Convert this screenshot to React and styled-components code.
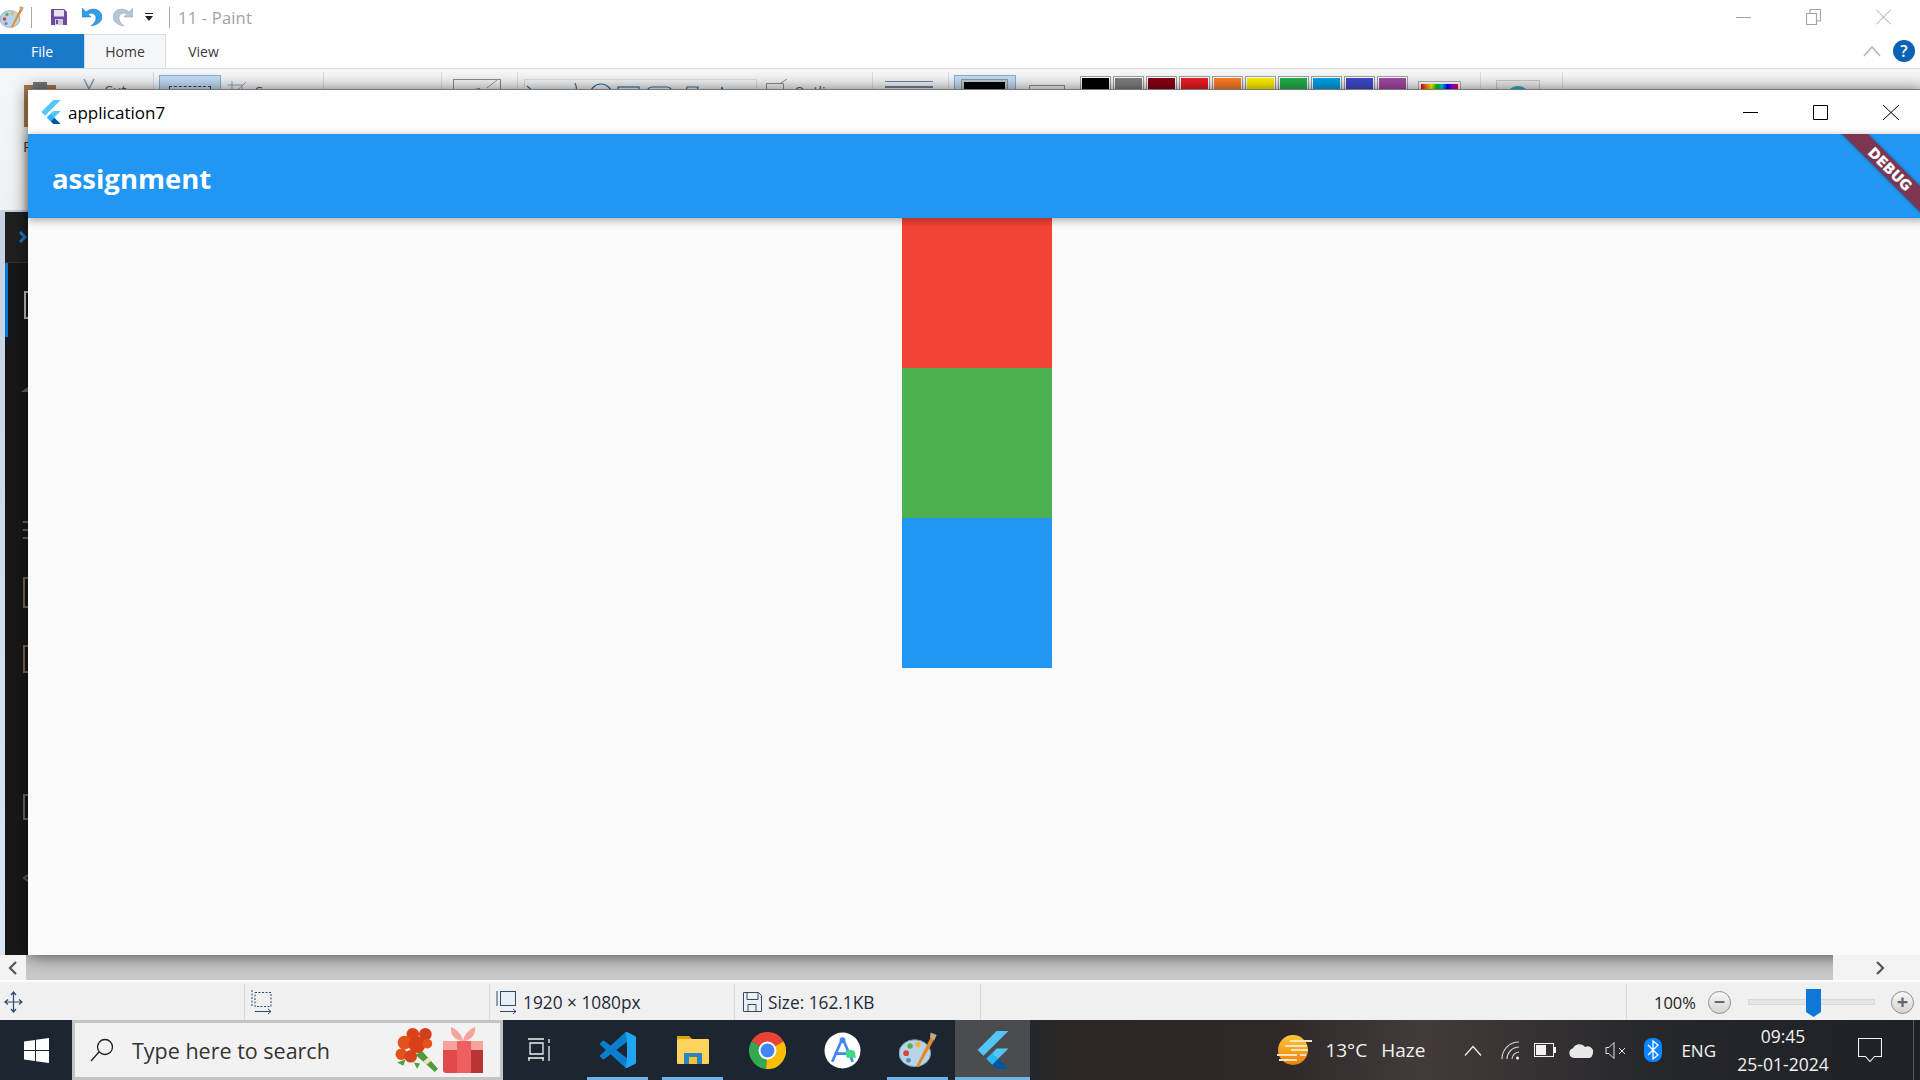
import React from 'react';
import styled, { createGlobalStyle } from 'styled-components';

const UI = `"Open Sans", "Noto Sans", "Liberation Sans", sans-serif`;

const GlobalStyle = createGlobalStyle`
  html, body { margin: 0; padding: 0; background: #fff; }
  body { font-family: ${UI}; overflow: hidden; }
`;

// desktop
const Screen = styled.div`
  position: relative;
  width: 1920px;
  height: 1080px;
  overflow: hidden;
  display: flex;
  flex-direction: column;
`;

// paint window behind the flutter app
const PaintTitle = styled.div`
  height: 34px;
  display: flex;
  align-items: center;
  background: #fff;
  flex: none;
`;
const QuickIcon = styled.span`
  display: flex;
  margin-left: ${(p) => p.$ml || 0}px;
`;
const TitleSep = styled.span`
  width: 1px;
  height: 21px;
  background: #a9a9a9;
  margin-left: ${(p) => p.$ml}px;
`;
const PaintName = styled.span`
  margin-left: 8px;
  font-size: 16.5px;
  color: #a2a2a2;
  letter-spacing: 0.2px;
`;
const TitleButtons = styled.div`
  margin-left: auto;
  display: flex;
  align-items: center;
  gap: ${(p) => p.$gap}px;
  padding-right: ${(p) => p.$right}px;
`;
const TabRow = styled.div`
  height: 34px;
  display: flex;
  align-items: stretch;
  background: #fff;
  flex: none;
`;
const Tab = styled.div`
  width: ${(p) => p.$w}px;
  box-sizing: border-box;
  display: flex;
  align-items: center;
  justify-content: center;
  font-size: 14px;
  color: ${(p) => (p.$file ? '#fff' : '#3b3b3b')};
  background: ${(p) => (p.$file ? '#1979ca' : p.$active ? '#f5f6f7' : '#fff')};
  border: ${(p) => (p.$active ? '1px solid #dadbdc' : 'none')};
  border-bottom: none;
`;
const TabEnd = styled.div`
  margin-left: auto;
  display: flex;
  align-items: center;
  gap: 12px;
  padding-right: 5px;
`;
const HelpDot = styled.span`
  width: 22px;
  height: 22px;
  border-radius: 50%;
  background: #0a62b4;
  color: #fff;
  font-size: 16px;
  font-weight: 600;
  display: flex;
  align-items: center;
  justify-content: center;
`;
const Ribbon = styled.div`
  height: 142px;
  flex: none;
  box-sizing: border-box;
  border-top: 1px solid #dadbdc;
  background: linear-gradient(#f5f6f7, #f0f1f2);
  display: flex;
  padding-top: 3px;
  font-size: 14px;
  color: #555;
`;
const Group = styled.div`
  width: ${(p) => p.$w}px;
  flex: none;
  box-sizing: border-box;
  height: 124px;
  padding-left: ${(p) => p.$pl || 0}px;
  border-right: 1px solid #dcdcdc;
  display: flex;
  align-items: flex-start;
`;
const PasteCol = styled.div`
  width: 34px;
  padding-top: 10px;
  display: flex;
  flex-direction: column;
  font-size: 15px;
  color: #444;
`;
const PasteLabel = styled.span`
  margin-top: 8px;
`;
const SmallTool = styled.div`
  display: flex;
  align-items: flex-start;
  gap: ${(p) => p.$gap ?? 5}px;
  margin-left: ${(p) => p.$ml || 0}px;
  margin-top: ${(p) => p.$mt ?? 6}px;
`;
const ToolLabel = styled.span`
  padding-top: ${(p) => p.$pt}px;
`;
const ToolCaret = styled.span`
  display: flex;
  margin-top: 10px;
`;
const SelectButton = styled.div`
  width: 62px;
  height: 64px;
  margin-top: 3px;
  box-sizing: border-box;
  background: #c6ddf5;
  border: 1px solid #7fb0e0;
  display: flex;
  justify-content: center;
  padding-top: 10px;
`;
const DashedBox = styled.div`
  width: 42px;
  height: 30px;
  box-sizing: border-box;
  border: 1px dashed #25486e;
`;
const BrushButton = styled.div`
  width: 48px;
  height: 50px;
  margin-top: 7px;
  box-sizing: border-box;
  border: 1px solid #8c8c8c;
  background: #f6f6f6;
`;
const ShapeBox = styled.div`
  width: 233px;
  height: 60px;
  margin-top: 7px;
  box-sizing: border-box;
  border: 1px solid #dcdcdc;
  display: flex;
`;
const SizeLines = styled.div`
  margin: 9px 0 0 12px;
  width: 48px;
  display: flex;
  flex-direction: column;
  gap: 4px;
`;
const SizeLine = styled.div`
  height: ${(p) => p.$h}px;
  background: #7184a3;
`;
const ColorOne = styled.div`
  width: 62px;
  height: 70px;
  margin-top: 3px;
  box-sizing: border-box;
  background: #c6ddf5;
  border: 1px solid #7fb0e0;
  padding: 3px 6px;
`;
const ColorFrame = styled.div`
  width: 47px;
  height: 40px;
  box-sizing: border-box;
  border: 1px solid #8f98a3;
  background: #fff;
  padding: 2px;
  box-shadow: inset 0 0 0 2px #c0c8d2;
`;
const ColorFill = styled.div`
  height: 100%;
  background: ${(p) => p.$c};
`;
const ColorTwo = styled.div`
  width: 36px;
  height: 36px;
  margin: 13px 0 0 13px;
  box-sizing: border-box;
  border: 1px solid #8c8c8c;
  background: #f4f4f4;
`;
const Swatches = styled.div`
  display: flex;
  gap: 2px;
  margin: 4px 0 0 15px;
`;
const Swatch = styled.div`
  width: 31px;
  height: 28px;
  box-sizing: border-box;
  border: 1px solid #a0a0a0;
  box-shadow: inset 0 0 0 1px #fff;
  background: ${(p) => p.$c};
`;
const Rainbow = styled.div`
  width: 43px;
  height: 40px;
  margin: 9px 0 0 10px;
  box-sizing: border-box;
  border: 1px solid #b0b0b0;
  padding: 2px;
  background: #fff;
`;
const RainbowFill = styled.div`
  height: 100%;
  background: linear-gradient(90deg, #f00, #f80, #ff0, #0c0, #0cf, #00f, #90f, #f00);
`;
const Paint3D = styled.div`
  width: 44px;
  height: 50px;
  margin-top: 8px;
  box-sizing: border-box;
  border: 1px solid #c8c8c8;
  background: #efefef;
  display: flex;
  justify-content: center;
  padding-top: 5px;
`;
const Bubble = styled.div`
  width: 24px;
  height: 24px;
  border-radius: 50%;
  background: #27b2c9;
`;

const CanvasArea = styled.div`
  flex: 1;
  min-height: 0;
  box-sizing: border-box;
  padding: 2px 0 0 5px;
  background: linear-gradient(#c6d1e2, #dbe6f5);
`;
// the vs code screenshot pasted in the paint canvas, only a thin strip shows
const CapturedEditor = styled.div`
  width: 100%;
  height: 100%;
  background: #181818;
  display: flex;
  flex-direction: column;
`;
const EditorHeader = styled.div`
  height: 51px;
  flex: none;
  box-sizing: border-box;
  background: #202020;
  border-bottom: 1px solid #333;
  padding: 14px 0 0 13px;
`;
const EditorRail = styled.div`
  display: flex;
  align-items: flex-start;
`;
const ActiveMark = styled.div`
  width: 3px;
  height: 74px;
  background: #0078d4;
`;
const ScrollRow = styled.div`
  height: 25px;
  flex: none;
  display: flex;
  background: linear-gradient(#c4c4c4, #c9c9c9);
`;
const ScrollButton = styled.div`
  position: relative;
  z-index: 2;
  width: ${(p) => p.$w}px;
  display: flex;
  align-items: center;
  justify-content: ${(p) => p.$justify || 'center'};
  padding-right: ${(p) => p.$pr || 0}px;
  box-sizing: border-box;
  background: #f3f3f3;
`;
const ScrollTrack = styled.div`
  flex: 1;
`;
const StatusBar = styled.div`
  height: 40px;
  flex: none;
  box-sizing: border-box;
  padding-top: 2px;
  border-top: 2px solid #fff;
  background: #f0f0f0;
  background-clip: padding-box;
  display: flex;
  font-size: 17.3px;
  color: #1f2a3a;
`;
const StatusCell = styled.div`
  width: ${(p) => p.$w}px;
  flex: ${(p) => (p.$grow ? 1 : 'none')};
  box-sizing: border-box;
  display: flex;
  align-items: center;
  gap: ${(p) => p.$gap ?? 6}px;
  padding-left: ${(p) => p.$pl || 0}px;
  border-right: ${(p) => (p.$last ? 'none' : '1px solid #d9d9d9')};
`;
const ZoomLabel = styled.span`
  width: 44px;
  color: #222;
  font-size: 16.5px;
`;
const ZoomButton = styled.span`
  width: 23px;
  height: 23px;
  box-sizing: border-box;
  border-radius: 50%;
  border: 1px solid #8e8e8e;
  background: linear-gradient(#f8f8f8, #d4d4d4);
  color: #666;
  font-size: 20px;
  font-weight: 700;
  line-height: 19px;
  text-align: center;
  margin-left: ${(p) => p.$ml || 0}px;
`;
const ZoomTrack = styled.div`
  position: relative;
  width: 127px;
  height: 6px;
  margin-left: 17px;
  background: #e3e8e6;
  border: 1px solid #d6dad8;
  box-sizing: border-box;
`;
const ZoomThumb = styled.div`
  position: absolute;
  left: 57px;
  top: -11px;
  width: 15px;
  height: 28px;
  background: #0e78d6;
  clip-path: polygon(0 0, 100% 0, 100% 82%, 50% 100%, 0 82%);
`;

// taskbar
const Taskbar = styled.div`
  height: 60px;
  flex: none;
  display: flex;
  align-items: stretch;
  color: #f2f2f2;
  background: linear-gradient(90deg, #1b2630 0, #1b2630 1000px, #2b2726 1060px, #2e2828 1280px, #433b3b 1420px, #3a3435 1500px, #25272b 1660px, #1e2125 1920px);
`;
const StartButton = styled.div`
  width: 72px;
  display: flex;
  align-items: center;
  justify-content: center;
  flex: none;
`;
const SearchBox = styled.div`
  width: 431px;
  flex: none;
  box-sizing: border-box;
  border: 3px solid #c4c4c4;
  background: #f2f2f2;
  display: flex;
  align-items: center;
  padding-left: 15px;
  color: #333;
  font-size: 21.5px;
`;
const SearchText = styled.span`
  margin-left: 18px;
  padding-top: 1px;
  flex: 1;
`;
const SearchArt = styled.div`
  display: flex;
  align-items: center;
  padding-right: 16px;
  gap: 3px;
`;
const TaskSlot = styled.div`
  position: relative;
  width: ${(p) => p.$w || 75}px;
  flex: none;
  box-sizing: border-box;
  padding-right: ${(p) => p.$pr || 0}px;
  display: flex;
  align-items: center;
  justify-content: center;
  background: ${(p) => (p.$active ? '#4a4c50' : 'transparent')};
  &::after {
    content: '';
    display: ${(p) => (p.$open ? 'block' : 'none')};
    position: absolute;
    bottom: 0;
    height: 3px;
    left: ${(p) => (p.$active ? 0 : 7)}px;
    right: ${(p) => (p.$active ? 0 : 7)}px;
    background: #6db3e8;
  }
`;
const Tray = styled.div`
  margin-left: auto;
  display: flex;
  align-items: center;
`;
const TrayText = styled.span`
  font-size: ${(p) => p.$size || 19}px;
  margin-left: ${(p) => p.$ml || 0}px;
`;
const TrayIcon = styled.span`
  display: flex;
  margin-left: ${(p) => p.$ml}px;
`;
const Clock = styled.div`
  margin-left: 20px;
  width: 94px;
  display: flex;
  flex-direction: column;
  align-items: center;
  gap: 5px;
  font-size: 17.5px;
  line-height: 23px;
  white-space: nowrap;
`;
const TrayEdge = styled.div`
  margin-left: 31px;
  width: 1px;
  height: 100%;
  background: #55585c;
  margin-right: 6px;
`;

// flutter app window, floats over paint
const FlutterWindow = styled.div`
  position: absolute;
  left: 28px;
  top: 89px;
  width: 1898px;
  height: 866px;
  z-index: 1;
  background: #fafafa;
  border-top: 1px solid #777;
  box-sizing: border-box;
  box-shadow: 0 1px 16px rgba(0, 0, 0, 0.6);
  display: flex;
  flex-direction: column;
`;
const WinTitle = styled.div`
  height: 44px;
  flex: none;
  background: #fff;
  display: flex;
  align-items: center;
  padding-left: 11px;
  font-size: 17px;
  color: #000;
`;
const WinName = styled.span`
  margin-left: 5px;
`;
const AppBarClip = styled.div`
  position: relative;
  z-index: 1;
  box-shadow: 0 2px 8px rgba(0, 0, 0, 0.35);
`;
const AppBar = styled.div`
  position: relative;
  height: 84px;
  overflow: hidden;
  background: #2196f3;
  display: flex;
  align-items: center;
  padding: 4px 0 0 24px;
  color: #fff;
  font-size: 27.5px;
  font-weight: 700;
  box-sizing: border-box;
`;
const DebugBanner = styled.div`
  position: absolute;
  top: 26px;
  right: -44px;
  width: 160px;
  height: 18px;
  transform: rotate(45deg);
  background: #7d3651;
  box-shadow: 0 0 3px rgba(0, 0, 0, 0.5);
  color: #fff;
  font-family: "DejaVu Sans", sans-serif;
  font-size: 14px;
  font-weight: 700;
  line-height: 18px;
  text-align: center;
  -webkit-text-stroke: 0.3px #fff;
`;
const AppBody = styled.div`
  flex: 1;
  display: flex;
  flex-direction: column;
  align-items: center;
`;
const ColorSquare = styled.div`
  width: 150px;
  height: 150px;
  flex: none;
  background: ${(p) => p.$c};
`;

const FlutterLogo = ({ size = 24 }) => (
  <svg width={size} height={size} viewBox="0 0 24 24">
    <path d="M14.3 0 2.3 12 6 15.7 21.7 0z" fill="#54c5f8" />
    <path d="M14.3 11.1 7.9 17.5l3.7 3.7 10.1-10.1z" fill="#54c5f8" />
    <path d="M11.6 21.2 14.3 24h7.4l-6.5-6.5z" fill="#01579b" />
    <path d="m7.9 17.5 3.7-3.7 3.6 3.7-3.6 3.7z" fill="#29b6f6" />
  </svg>
);

const Line = ({ w = 16, h = 16, color = '#000', d, sw = 1 }) => (
  <svg width={w} height={h} viewBox={`0 0 ${w} ${h}`} fill="none" stroke={color} strokeWidth={sw}>
    <path d={d} />
  </svg>
);

const PaintIcon = ({ size = 24 }) => (
  <svg width={size} height={size} viewBox="0 0 24 24">
    <ellipse cx="10" cy="14" rx="10" ry="8.5" fill="#b9d4e6" stroke="#7c97ad" strokeWidth="0.6" />
    <circle cx="4.5" cy="14" r="1.8" fill="#d8443c" />
    <circle cx="7" cy="9.5" r="1.7" fill="#5cab58" />
    <circle cx="12" cy="8.5" r="1.7" fill="#e9b93a" />
    <circle cx="6" cy="18.5" r="1.5" fill="#4a8dd2" />
    <path d="M21 2 11 22l1.5.8L23 4z" fill="#e18b2c" />
    <path d="M20 1l3.8 1.6-1.6 3.4L19.5 4z" fill="#c8a884" />
  </svg>
);

const SaveIcon = () => (
  <svg width="16" height="16" viewBox="0 0 16 16">
    <path d="M0 0h13l3 3v13H0z" fill="#6f4a9e" />
    <rect x="3" y="1" width="10" height="6.5" fill="#e6e2ef" />
    <rect x="4" y="10" width="8" height="6" fill="#cfc8df" />
    <rect x="5" y="11" width="2" height="4" fill="#6f4a9e" />
  </svg>
);

const ArrowIcon = ({ flip, color, edge }) => (
  <svg width="20" height="21" viewBox="0 0 20 21" style={flip ? { transform: 'scaleX(-1)' } : undefined}>
    <path d="M0 1v9h9L6 7c3-2 8-.5 8 4 0 3-2 5.500-5 8 6-1 11-4 11-9C20 3 11-1 4 5z" fill={color} stroke={edge} strokeWidth="0.5" />
  </svg>
);

const VsCodeIcon = () => (
  <svg width="36" height="36" viewBox="0 0 24 24">
    <path d="M23.15 2.587 18.21.21a1.494 1.494 0 0 0-1.705.29l-9.46 8.63-4.12-3.128a.999.999 0 0 0-1.276.057L.327 7.261A1 1 0 0 0 .326 8.74L3.899 12 .326 15.26a1 1 0 0 0 .001 1.479L1.65 17.94a.999.999 0 0 0 1.276.057l4.12-3.128 9.46 8.63a1.492 1.492 0 0 0 1.704.29l4.942-2.377A1.5 1.5 0 0 0 24 20.06V3.939a1.5 1.5 0 0 0-.85-1.352zm-5.146 14.861L10.826 12l7.178-5.448v10.896z" fill="#0a7fd0" />
    <path d="M17 .2c.4-.1.8-.1 1.200 0l4.950 2.390A1.500 1.500 0 0 1 24 3.940v16.120a1.500 1.500 0 0 1-.85 1.350L18.200 23.800c-.4.100-.8.100-1.200-.100l1-6.250V6.550z" fill="#1fa6f2" />
  </svg>
);

const ExplorerIcon = () => (
  <svg width="34" height="34" viewBox="0 0 34 34">
    <path d="M1 3h12l3 3h-15z" fill="#e0a30e" />
    <rect x="1" y="6" width="32" height="25" rx="1" fill="#ffd35c" />
    <path d="M8 31V20h18v11h-5v-5h-8v5z" fill="#2a83c4" />
    <rect x="13" y="24" width="8" height="7" fill="#f4c430" />
  </svg>
);

const ChromeIcon = () => (
  <svg width="37" height="37" viewBox="0 0 24 24">
    <path d="M12 12 1.600 6a12 12 0 0 1 20.800 0z" fill="#ea4335" />
    <path d="M12 12 1.600 6A12 12 0 0 0 11 24z" fill="#34a853" />
    <path d="M12 12 22.400 6A12 12 0 0 1 11 24z" fill="#fbbc05" />
    <circle cx="12" cy="12" r="5.800" fill="#fff" />
    <circle cx="12" cy="12" r="4.500" fill="#4285f4" />
  </svg>
);

const StudioIcon = () => (
  <svg width="37" height="37" viewBox="0 0 36 36">
    <circle cx="18" cy="18" r="17.500" fill="#fff" />
    <path d="M18 6 8 29M18 6l10 23M10 21h16" stroke="#4285f4" strokeWidth="2.600" fill="none" />
    <circle cx="18" cy="8" r="2.800" fill="#4285f4" />
    <path d="M21 19a7 7 0 0 1 9 0l1 6h-9z" fill="#3ddc84" />
  </svg>
);

const Bouquet = () => (
  <svg width="44" height="45" viewBox="0 0 42 43">
    <path d="M20 26 38 42l3-3-16-18z" fill="#4f9c3a" />
    <path d="M27 32l5-4 3 3-5 4z" fill="#efe3c2" />
    <circle cx="17" cy="6" r="6" fill="#d8431a" />
    <circle cx="29" cy="6" r="6" fill="#cf3f1c" />
    <circle cx="9" cy="14" r="6.500" fill="#e4521c" />
    <circle cx="21" cy="16" r="8" fill="#d9401a" />
    <circle cx="6" cy="25" r="5.500" fill="#e4521c" />
    <circle cx="15" cy="27" r="6" fill="#d8431a" />
    <circle cx="31" cy="15" r="4.500" fill="#e4521c" />
    <path d="M2 33l8-3-2 6zM18 33l6 1-3 5z" fill="#52a23a" />
  </svg>
);

const Gift = () => (
  <svg width="42" height="48" viewBox="0 0 42 48">
    <path d="M21 15C12 14 8 8 9 1c5 2 11 7 12 14 1-7 7-12 12-14 1 7-3 13-12 14z" fill="#f5a49b" />
    <rect x="1" y="15" width="40" height="32" rx="3" fill="#e04a4a" />
    <rect x="1" y="15" width="40" height="9" fill="#f5a49b" />
    <rect x="29" y="24" width="12" height="23" fill="#b93434" />
    <rect x="15" y="15" width="14" height="32" fill="#ee5f5f" />
  </svg>
);

const WeatherIcon = () => (
  <svg width="36" height="30" viewBox="0 0 36 30">
    <defs>
      <linearGradient id="sun" x1="0" y1="0" x2="0" y2="1">
        <stop offset="0" stopColor="#fcc73a" />
        <stop offset="1" stopColor="#ee7d0e" />
      </linearGradient>
    </defs>
    <circle cx="17" cy="15" r="15" fill="url(#sun)" />
    <path d="M14 6h22M9 11h22M15 15h17M1 20h20M24 20h6M3 25h18" stroke="#f8e3b4" strokeWidth="2" />
  </svg>
);

const App = () => {
  const swatches = ['#000000', '#7f7f7f', '#880015', '#ed1c24', '#ff7f27', '#fff200', '#22b14c', '#00a2e8', '#3f48cc', '#a349a4'];

  return (
    <Screen>
      <GlobalStyle />

      <PaintTitle>
        <PaintIcon />
        <TitleSep $ml={7} />
        <QuickIcon $ml={19}><SaveIcon /></QuickIcon>
        <QuickIcon $ml={15}><ArrowIcon color="#2f9fe8" edge="#1673b8" /></QuickIcon>
        <QuickIcon $ml={11}><ArrowIcon flip color="#b6c6d6" edge="#90a2b4" /></QuickIcon>
        <QuickIcon $ml={12}>
          <svg width="8" height="9" viewBox="0 0 8 9"><path d="M0 0h8v1H0zM0 3h8L4 8z" fill="#222" /></svg>
        </QuickIcon>
        <TitleSep $ml={16} />
        <PaintName>11 - Paint</PaintName>
        <TitleButtons $gap={55} $right={29}>
          <Line w={15} h={16} color="#a3a3a3" d="M0 8.500h15" />
          <Line w={15} h={16} color="#a3a3a3" d="M.5 4.500h10v11H.5zM4 4V.5h10.500V12H11" sw={1.200} />
          <Line w={15} h={16} color="#a3a3a3" d="M0 .5l15 15M15 .5 0 15.500" />
        </TitleButtons>
      </PaintTitle>

      <TabRow>
        <Tab $w={84} $file>File</Tab>
        <Tab $w={82} $active>Home</Tab>
        <Tab $w={75}>View</Tab>
        <TabEnd>
          <Line w={18} h={12} color="#b5b5b5" d="M1 11 9 2l8 9" sw={1.500} />
          <HelpDot>?</HelpDot>
        </TabEnd>
      </TabRow>

      <Ribbon>
        <Group $w={154} $pl={23}>
          <PasteCol>
            <svg width="34" height="46" viewBox="0 0 34 46">
              <rect x="1" y="3" width="32" height="42" fill="#a9784a" />
              <rect x="5" y="7" width="24" height="34" fill="#f4f4f4" />
              <rect x="10" y="0" width="14" height="7" fill="#777" />
            </svg>
            <PasteLabel>Paste</PasteLabel>
          </PasteCol>
          <SmallTool $ml={25} $gap={8}>
            <Line w={14} h={18} color="#8d9fb5" d="M2 1l8 16M12 1 4 17" sw={1.600} />
            <ToolLabel $pt={3}>Cut</ToolLabel>
          </SmallTool>
        </Group>

        <Group $w={170} $pl={5}>
          <SelectButton><DashedBox /></SelectButton>
          <SmallTool $ml={7} $gap={7} $mt={9}>
            <Line w={19} h={18} color="#93a3b6" d="M4 0v14h15M0 4h14v14M2 16 18 1" />
            <ToolLabel $pt={1}>Crop</ToolLabel>
          </SmallTool>
        </Group>

        <Group $w={118} />

        <Group $w={76} $pl={11}>
          <BrushButton>
            <svg width="46" height="20" viewBox="0 0 46 20">
              <path d="M20 9l6-1 1 3-6 1z" fill="#d9583a" />
              <path d="M33 8 43 0" stroke="#9aa0a8" />
            </svg>
          </BrushButton>
        </Group>

        <Group $w={355} $pl={6}>
          <ShapeBox>
            <svg width="231" height="30" viewBox="0 0 231 30" fill="none" stroke="#2f6ea8" strokeWidth="1.200">
              <path d="M2 6 10 13" />
              <path d="M50 3c2 4 2 8 0 12" />
              <circle cx="76" cy="15" r="11" />
              <rect x="93" y="7" width="21" height="16" />
              <rect x="122" y="7" width="25" height="16" rx="5" />
              <path d="M158 23 162 7h11l-4 16z" />
              <path d="M197 7 192 23M197 7l5 16" />
            </svg>
          </ShapeBox>
          <SmallTool $ml={9} $gap={5} $mt={7}>
            <Line w={23} h={18} color="#8d8d8d" d="M.5 4.500h17V18M.5 4.500V18M15 4 21 0" />
            <ToolLabel $pt={3}>Outline</ToolLabel>
            <ToolCaret>
              <svg width="8" height="5" viewBox="0 0 8 5"><path d="M0 0h8L4 5z" fill="#555" /></svg>
            </ToolCaret>
          </SmallTool>
        </Group>

        <Group $w={76}>
          <SizeLines>
            <SizeLine $h={1} />
            <SizeLine $h={2} />
            <SizeLine $h={4} />
          </SizeLines>
        </Group>

        <Group $w={532} $pl={5}>
          <ColorOne>
            <ColorFrame><ColorFill $c="#000" /></ColorFrame>
          </ColorOne>
          <ColorTwo />
          <Swatches>
            {swatches.map((c) => <Swatch key={c} $c={c} />)}
          </Swatches>
          <Rainbow><RainbowFill /></Rainbow>
        </Group>

        <Group $w={82} $pl={15}>
          <Paint3D><Bubble /></Paint3D>
        </Group>
      </Ribbon>

      <CanvasArea>
        <CapturedEditor>
          <EditorHeader>
            <Line w={10} h={12} color="#1a78c2" d="M2 1l5 5-5 5" sw={3} />
          </EditorHeader>
          <EditorRail>
            <ActiveMark />
            {/* bits of the activity bar icons that stick out left of the app window */}
            <svg width="20" height="640" viewBox="0 0 20 640" fill="none" strokeWidth="2">
              <path d="M20 29h-3v26h3" stroke="#c9c2b4" />
              <path d="M20 125l-4 3h4" stroke="#5f6a76" />
              <path d="M15 259h5M15 267h5M15 275h5" stroke="#6a6a6a" />
              <path d="M20 315h-4v29h4" stroke="#756b60" />
              <path d="M20 383h-4v26h4" stroke="#7a6a5a" />
              <path d="M20 532h-4v24h4" stroke="#6a6a6a" />
              <path d="M20 612l-4 3 4 3" stroke="#5f5f5f" />
            </svg>
          </EditorRail>
        </CapturedEditor>
      </CanvasArea>

      <ScrollRow>
        <ScrollButton $w={26}>
          <Line w={10} h={14} color="#555" d="M8 1 2 7l6 6" sw={2.200} />
        </ScrollButton>
        <ScrollTrack />
        <ScrollButton $w={87} $justify="flex-end" $pr={35}>
          <Line w={10} h={14} color="#555" d="M2 1l6 6-6 6" sw={2.200} />
        </ScrollButton>
      </ScrollRow>

      <StatusBar>
        <StatusCell $w={245} $pl={4}>
          <Line w={19} h={22} color="#2c4a6e" d="M9.500 1v20M1 11h17M7 4l2.500-3L12 4M7 18l2.500 3 2.500-3M4 8.500 1 11l3 2.500M15 8.500l3 2.500-3 2.500" sw={1.200} />
        </StatusCell>
        <StatusCell $w={245} $pl={5}>
          <svg width="22" height="24" viewBox="0 0 22 24" fill="none" stroke="#2c4a6e">
            <path d="M2 0v16M5 2.500h16v14H5z" strokeDasharray="2 1.500" />
            <path d="M5 21.500h16M18 19l3 2.500-3 2.500" />
          </svg>
        </StatusCell>
        <StatusCell $w={245} $pl={5}>
          <svg width="22" height="24" viewBox="0 0 22 24" fill="none" stroke="#2c4a6e">
            <rect x="5.500" y="1.500" width="15" height="14" fill="#e4f0f6" />
            <path d="M2 1v15M5 21.500h16M18 19l3 2.500-3 2.500" />
          </svg>
          1920 × 1080px
        </StatusCell>
        <StatusCell $w={246} $pl={8}>
          <svg width="19" height="20" viewBox="0 0 19 20" fill="none" stroke="#2c4a6e">
            <path d="M.5.5h15l3 3v16H.5zM4 .5v7h11v-7M5 19.500v-7h8v7" />
          </svg>
          Size: 162.1KB
        </StatusCell>
        <StatusCell $w={646} />
        <StatusCell $grow $last $gap={0} $pl={27}>
          <ZoomLabel>100%</ZoomLabel>
          <ZoomButton $ml={10}>−</ZoomButton>
          <ZoomTrack><ZoomThumb /></ZoomTrack>
          <ZoomButton $ml={16}>+</ZoomButton>
        </StatusCell>
      </StatusBar>

      <Taskbar>
        <StartButton>
          <svg width="25" height="25" viewBox="0 0 25 25">
            <path d="M0 3.500 11 2v10H0zM12 1.800 25 0v12H12zM0 13h11v10L0 21.500zM12 13h13v12l-13-1.800z" fill="#fff" />
          </svg>
        </StartButton>
        <SearchBox>
          <Line w={24} h={24} color="#222" d="M1 23 9 14M15 1.500a7.500 7.500 0 1 1 0 15 7.500 7.500 0 0 1 0-15z" sw={1.300} />
          <SearchText>Type here to search</SearchText>
          <SearchArt><Bouquet /><Gift /></SearchArt>
        </SearchBox>
        <TaskSlot $w={77} $pr={6}>
          <Line w={24} h={24} color="#f2f2f2" d="M1 1h16M3 5h13v11H3zM1 20h16M2 20v3M16 20v3M22 1v4M22 8v15" sw={1.300} />
        </TaskSlot>
        <TaskSlot $open><VsCodeIcon /></TaskSlot>
        <TaskSlot $open><ExplorerIcon /></TaskSlot>
        <TaskSlot><ChromeIcon /></TaskSlot>
        <TaskSlot><StudioIcon /></TaskSlot>
        <TaskSlot $open><PaintIcon size={38} /></TaskSlot>
        <TaskSlot $open $active><FlutterLogo size={38} /></TaskSlot>

        <Tray>
          <WeatherIcon />
          <TrayText $ml={13}>13°C</TrayText>
          <TrayText $ml={14}>Haze</TrayText>
          <TrayIcon $ml={39}><Line w={18} h={11} color="#f0f0f0" d="M1 10.500 9 1.500l8 9" sw={1.300} /></TrayIcon>
          <TrayIcon $ml={19}>
            <svg width="19" height="19" viewBox="0 0 19 19" fill="none" stroke="#d8d8d8" strokeWidth="1.100">
              <path d="M1 18C1 9 8 1 18 1M6 18c0-6 5-12 12-12M11 18c0-3 3-7 7-7" />
              <circle cx="16.500" cy="17" r="1.500" fill="#f2f2f2" stroke="none" />
            </svg>
          </TrayIcon>
          <TrayIcon $ml={14}>
            <svg width="22" height="14" viewBox="0 0 22 14">
              <rect x=".5" y=".5" width="19" height="13" fill="none" stroke="#f2f2f2" />
              <rect x="2" y="2" width="10" height="10" fill="#f2f2f2" />
              <rect x="20" y="4" width="2" height="6" fill="#f2f2f2" />
            </svg>
          </TrayIcon>
          <TrayIcon $ml={13}>
            <svg width="24" height="15" viewBox="0 0 24 15">
              <path d="M5 15a5 5 0 0 1-1-9.800A7 7 0 0 1 16 4a5.500 5.500 0 0 1 8 6c-.5 3-2 5-4 5z" fill="#e8e8e8" />
            </svg>
          </TrayIcon>
          <TrayIcon $ml={12}>
            <Line w={22} h={17} color="#e4e4e4" d="M1 5.500h3l5-5v16l-5-5H1zM14 6l6 6M20 6l-6 6" />
          </TrayIcon>
          <TrayIcon $ml={17}>
            <svg width="18" height="24" viewBox="0 0 18 24">
              <rect width="18" height="24" rx="8" fill="#0a84ff" />
              <path d="M4 7l10 10-5 4V3l5 4L4 17" fill="none" stroke="#fff" strokeWidth="1.300" />
            </svg>
          </TrayIcon>
          <TrayText $size={17} $ml={19}>ENG</TrayText>
          <Clock>
            <span>09:45</span>
            <span>25-01-2024</span>
          </Clock>
          <TrayIcon $ml={28}>
            <Line w={24} h={24} color="#f2f2f2" d="M.5.5h23v18h-7l-4.500 5-4.500-5h-7z" sw={1.100} />
          </TrayIcon>
          <TrayEdge />
        </Tray>
      </Taskbar>

      <FlutterWindow>
        <WinTitle>
          <FlutterLogo size={24} />
          <WinName>application7</WinName>
          <TitleButtons $gap={55} $right={27}>
            <Line w={15} h={15} d="M0 7.500h15" />
            <Line w={15} h={15} d="M.5.5h14v14H.5z" />
            <Line w={16} h={15} d="M0 0l16 15M16 0 0 15" />
          </TitleButtons>
        </WinTitle>
        <AppBarClip>
          <AppBar>
            assignment
            <DebugBanner>DEBUG</DebugBanner>
          </AppBar>
        </AppBarClip>
        <AppBody>
          <ColorSquare $c="#f44336" />
          <ColorSquare $c="#4caf50" />
          <ColorSquare $c="#2196f3" />
        </AppBody>
      </FlutterWindow>
    </Screen>
  );
};

export default App;
